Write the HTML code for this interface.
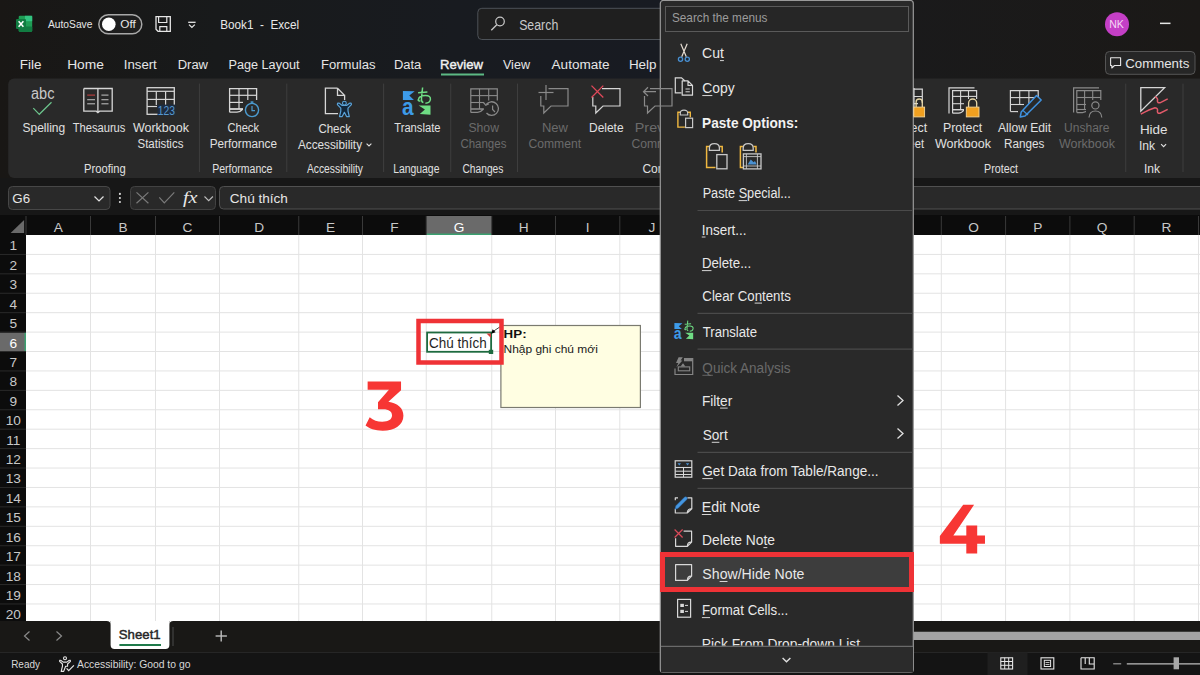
<!DOCTYPE html>
<html><head><meta charset="utf-8"><style>
html,body{margin:0;padding:0;width:1200px;height:675px;overflow:hidden;background:#181b1e;}
svg{display:block;font-family:"Liberation Sans",sans-serif;}
</style></head><body>
<svg width="1200" height="675" viewBox="0 0 1200 675">
<defs><linearGradient id="tg" x1="0" y1="0" x2="1" y2="0"><stop offset="0" stop-color="#191715"/><stop offset="0.18" stop-color="#181a1b"/><stop offset="0.38" stop-color="#181b20"/><stop offset="0.55" stop-color="#181b22"/><stop offset="0.75" stop-color="#1a1a1b"/><stop offset="1" stop-color="#1b1917"/></linearGradient></defs>
<rect x="0" y="0" width="1200" height="178" fill="url(#tg)"/>
<rect x="8.2" y="78.4" width="1205" height="99.6" rx="6" fill="#292929"/>
<rect x="0" y="178" width="1200" height="37" fill="#171717"/>
<rect x="8.5" y="186.5" width="101.5" height="23" rx="4" fill="#292929" stroke="#474747" stroke-width="1"/>
<rect x="130.5" y="186.5" width="85" height="23" rx="4" fill="#292929" stroke="#424242" stroke-width="1"/>
<rect x="219.5" y="186.5" width="1000" height="22.5" rx="4" fill="#292929" stroke="#505050" stroke-width="1"/>
<rect x="0" y="215" width="1200" height="20" fill="#0c0c0c"/>
<rect x="0" y="235" width="26" height="386" fill="#0c0c0c"/>
<rect x="26" y="235" width="1174" height="386" fill="#ffffff"/>
<line x1="90.5" y1="235" x2="90.5" y2="621" stroke="#e3e3e3" stroke-width="1"/>
<line x1="155.5" y1="235" x2="155.5" y2="621" stroke="#e3e3e3" stroke-width="1"/>
<line x1="219.5" y1="235" x2="219.5" y2="621" stroke="#e3e3e3" stroke-width="1"/>
<line x1="298.75" y1="235" x2="298.75" y2="621" stroke="#e3e3e3" stroke-width="1"/>
<line x1="362.5" y1="235" x2="362.5" y2="621" stroke="#e3e3e3" stroke-width="1"/>
<line x1="426.25" y1="235" x2="426.25" y2="621" stroke="#e3e3e3" stroke-width="1"/>
<line x1="491.75" y1="235" x2="491.75" y2="621" stroke="#e3e3e3" stroke-width="1"/>
<line x1="555.5" y1="235" x2="555.5" y2="621" stroke="#e3e3e3" stroke-width="1"/>
<line x1="619.8" y1="235" x2="619.8" y2="621" stroke="#e3e3e3" stroke-width="1"/>
<line x1="684.1" y1="235" x2="684.1" y2="621" stroke="#e3e3e3" stroke-width="1"/>
<line x1="748.4" y1="235" x2="748.4" y2="621" stroke="#e3e3e3" stroke-width="1"/>
<line x1="812.7" y1="235" x2="812.7" y2="621" stroke="#e3e3e3" stroke-width="1"/>
<line x1="877.0" y1="235" x2="877.0" y2="621" stroke="#e3e3e3" stroke-width="1"/>
<line x1="941.3" y1="235" x2="941.3" y2="621" stroke="#e3e3e3" stroke-width="1"/>
<line x1="1005.6" y1="235" x2="1005.6" y2="621" stroke="#e3e3e3" stroke-width="1"/>
<line x1="1069.9" y1="235" x2="1069.9" y2="621" stroke="#e3e3e3" stroke-width="1"/>
<line x1="1134.2" y1="235" x2="1134.2" y2="621" stroke="#e3e3e3" stroke-width="1"/>
<line x1="1198.5" y1="235" x2="1198.5" y2="621" stroke="#e3e3e3" stroke-width="1"/>
<line x1="26" y1="254.42000000000002" x2="1200" y2="254.42000000000002" stroke="#e3e3e3" stroke-width="1"/>
<line x1="26" y1="273.84000000000003" x2="1200" y2="273.84000000000003" stroke="#e3e3e3" stroke-width="1"/>
<line x1="26" y1="293.26" x2="1200" y2="293.26" stroke="#e3e3e3" stroke-width="1"/>
<line x1="26" y1="312.68" x2="1200" y2="312.68" stroke="#e3e3e3" stroke-width="1"/>
<line x1="26" y1="332.1" x2="1200" y2="332.1" stroke="#e3e3e3" stroke-width="1"/>
<line x1="26" y1="351.52" x2="1200" y2="351.52" stroke="#e3e3e3" stroke-width="1"/>
<line x1="26" y1="370.94" x2="1200" y2="370.94" stroke="#e3e3e3" stroke-width="1"/>
<line x1="26" y1="390.36" x2="1200" y2="390.36" stroke="#e3e3e3" stroke-width="1"/>
<line x1="26" y1="409.78000000000003" x2="1200" y2="409.78000000000003" stroke="#e3e3e3" stroke-width="1"/>
<line x1="26" y1="429.20000000000005" x2="1200" y2="429.20000000000005" stroke="#e3e3e3" stroke-width="1"/>
<line x1="26" y1="448.62" x2="1200" y2="448.62" stroke="#e3e3e3" stroke-width="1"/>
<line x1="26" y1="468.04" x2="1200" y2="468.04" stroke="#e3e3e3" stroke-width="1"/>
<line x1="26" y1="487.46000000000004" x2="1200" y2="487.46000000000004" stroke="#e3e3e3" stroke-width="1"/>
<line x1="26" y1="506.88" x2="1200" y2="506.88" stroke="#e3e3e3" stroke-width="1"/>
<line x1="26" y1="526.3" x2="1200" y2="526.3" stroke="#e3e3e3" stroke-width="1"/>
<line x1="26" y1="545.72" x2="1200" y2="545.72" stroke="#e3e3e3" stroke-width="1"/>
<line x1="26" y1="565.1400000000001" x2="1200" y2="565.1400000000001" stroke="#e3e3e3" stroke-width="1"/>
<line x1="26" y1="584.5600000000001" x2="1200" y2="584.5600000000001" stroke="#e3e3e3" stroke-width="1"/>
<line x1="26" y1="603.98" x2="1200" y2="603.98" stroke="#e3e3e3" stroke-width="1"/>
<rect x="426.25" y="216" width="65.5" height="19" fill="#6a6a6a"/>
<rect x="426.25" y="233.5" width="65.5" height="1.5" fill="#3aa070"/>
<rect x="0" y="332.6" width="26" height="19.42" fill="#6a6a6a"/>
<rect x="24.5" y="332.6" width="1.5" height="19.42" fill="#3aa070"/>
<line x1="26" y1="216" x2="26" y2="235" stroke="#3a3a3a" stroke-width="1"/>
<line x1="90.5" y1="216" x2="90.5" y2="235" stroke="#3a3a3a" stroke-width="1"/>
<line x1="155.5" y1="216" x2="155.5" y2="235" stroke="#3a3a3a" stroke-width="1"/>
<line x1="219.5" y1="216" x2="219.5" y2="235" stroke="#3a3a3a" stroke-width="1"/>
<line x1="298.75" y1="216" x2="298.75" y2="235" stroke="#3a3a3a" stroke-width="1"/>
<line x1="362.5" y1="216" x2="362.5" y2="235" stroke="#3a3a3a" stroke-width="1"/>
<line x1="426.25" y1="216" x2="426.25" y2="235" stroke="#3a3a3a" stroke-width="1"/>
<line x1="491.75" y1="216" x2="491.75" y2="235" stroke="#3a3a3a" stroke-width="1"/>
<line x1="555.5" y1="216" x2="555.5" y2="235" stroke="#3a3a3a" stroke-width="1"/>
<line x1="619.8" y1="216" x2="619.8" y2="235" stroke="#3a3a3a" stroke-width="1"/>
<line x1="684.1" y1="216" x2="684.1" y2="235" stroke="#3a3a3a" stroke-width="1"/>
<line x1="748.4" y1="216" x2="748.4" y2="235" stroke="#3a3a3a" stroke-width="1"/>
<line x1="812.7" y1="216" x2="812.7" y2="235" stroke="#3a3a3a" stroke-width="1"/>
<line x1="877.0" y1="216" x2="877.0" y2="235" stroke="#3a3a3a" stroke-width="1"/>
<line x1="941.3" y1="216" x2="941.3" y2="235" stroke="#3a3a3a" stroke-width="1"/>
<line x1="1005.6" y1="216" x2="1005.6" y2="235" stroke="#3a3a3a" stroke-width="1"/>
<line x1="1069.9" y1="216" x2="1069.9" y2="235" stroke="#3a3a3a" stroke-width="1"/>
<line x1="1134.2" y1="216" x2="1134.2" y2="235" stroke="#3a3a3a" stroke-width="1"/>
<line x1="1198.5" y1="216" x2="1198.5" y2="235" stroke="#3a3a3a" stroke-width="1"/>
<line x1="0" y1="254.42000000000002" x2="26" y2="254.42000000000002" stroke="#2a2a2a" stroke-width="1"/>
<line x1="0" y1="273.84000000000003" x2="26" y2="273.84000000000003" stroke="#2a2a2a" stroke-width="1"/>
<line x1="0" y1="293.26" x2="26" y2="293.26" stroke="#2a2a2a" stroke-width="1"/>
<line x1="0" y1="312.68" x2="26" y2="312.68" stroke="#2a2a2a" stroke-width="1"/>
<line x1="0" y1="332.1" x2="26" y2="332.1" stroke="#2a2a2a" stroke-width="1"/>
<line x1="0" y1="351.52" x2="26" y2="351.52" stroke="#2a2a2a" stroke-width="1"/>
<line x1="0" y1="370.94" x2="26" y2="370.94" stroke="#2a2a2a" stroke-width="1"/>
<line x1="0" y1="390.36" x2="26" y2="390.36" stroke="#2a2a2a" stroke-width="1"/>
<line x1="0" y1="409.78000000000003" x2="26" y2="409.78000000000003" stroke="#2a2a2a" stroke-width="1"/>
<line x1="0" y1="429.20000000000005" x2="26" y2="429.20000000000005" stroke="#2a2a2a" stroke-width="1"/>
<line x1="0" y1="448.62" x2="26" y2="448.62" stroke="#2a2a2a" stroke-width="1"/>
<line x1="0" y1="468.04" x2="26" y2="468.04" stroke="#2a2a2a" stroke-width="1"/>
<line x1="0" y1="487.46000000000004" x2="26" y2="487.46000000000004" stroke="#2a2a2a" stroke-width="1"/>
<line x1="0" y1="506.88" x2="26" y2="506.88" stroke="#2a2a2a" stroke-width="1"/>
<line x1="0" y1="526.3" x2="26" y2="526.3" stroke="#2a2a2a" stroke-width="1"/>
<line x1="0" y1="545.72" x2="26" y2="545.72" stroke="#2a2a2a" stroke-width="1"/>
<line x1="0" y1="565.1400000000001" x2="26" y2="565.1400000000001" stroke="#2a2a2a" stroke-width="1"/>
<line x1="0" y1="584.5600000000001" x2="26" y2="584.5600000000001" stroke="#2a2a2a" stroke-width="1"/>
<line x1="0" y1="603.98" x2="26" y2="603.98" stroke="#2a2a2a" stroke-width="1"/>
<path d="M24.1,220 L24.1,233.1 L10.6,233.1 Z" fill="#6a6a6a"/>
<text x="58.25" y="231.9" font-size="13.66" fill="#c8c8c8" text-anchor="middle">A</text>
<text x="123.00" y="231.9" font-size="13.66" fill="#c8c8c8" text-anchor="middle">B</text>
<text x="187.50" y="231.9" font-size="13.66" fill="#c8c8c8" text-anchor="middle">C</text>
<text x="259.12" y="231.9" font-size="13.66" fill="#c8c8c8" text-anchor="middle">D</text>
<text x="330.62" y="231.9" font-size="13.66" fill="#c8c8c8" text-anchor="middle">E</text>
<text x="394.38" y="231.9" font-size="13.66" fill="#c8c8c8" text-anchor="middle">F</text>
<text x="459.00" y="231.9" font-size="13.66" fill="#ffffff" text-anchor="middle">G</text>
<text x="523.62" y="231.9" font-size="13.66" fill="#c8c8c8" text-anchor="middle">H</text>
<text x="587.65" y="231.9" font-size="13.66" fill="#c8c8c8" text-anchor="middle">I</text>
<text x="651.95" y="231.9" font-size="13.66" fill="#c8c8c8" text-anchor="middle">J</text>
<text x="716.25" y="231.9" font-size="13.66" fill="#c8c8c8" text-anchor="middle">K</text>
<text x="780.55" y="231.9" font-size="13.66" fill="#c8c8c8" text-anchor="middle">L</text>
<text x="844.85" y="231.9" font-size="13.66" fill="#c8c8c8" text-anchor="middle">M</text>
<text x="909.15" y="231.9" font-size="13.66" fill="#c8c8c8" text-anchor="middle">N</text>
<text x="973.45" y="231.9" font-size="13.66" fill="#c8c8c8" text-anchor="middle">O</text>
<text x="1037.75" y="231.9" font-size="13.66" fill="#c8c8c8" text-anchor="middle">P</text>
<text x="1102.05" y="231.9" font-size="13.66" fill="#c8c8c8" text-anchor="middle">Q</text>
<text x="1166.35" y="231.9" font-size="13.66" fill="#c8c8c8" text-anchor="middle">R</text>
<text x="13.3" y="250.40" font-size="13.66" fill="#c8c8c8" text-anchor="middle">1</text>
<text x="13.3" y="269.82" font-size="13.66" fill="#c8c8c8" text-anchor="middle">2</text>
<text x="13.3" y="289.24" font-size="13.66" fill="#c8c8c8" text-anchor="middle">3</text>
<text x="13.3" y="308.66" font-size="13.66" fill="#c8c8c8" text-anchor="middle">4</text>
<text x="13.3" y="328.08" font-size="13.66" fill="#c8c8c8" text-anchor="middle">5</text>
<text x="13.3" y="347.50" font-size="13.66" fill="#ffffff" text-anchor="middle">6</text>
<text x="13.3" y="366.92" font-size="13.66" fill="#c8c8c8" text-anchor="middle">7</text>
<text x="13.3" y="386.34" font-size="13.66" fill="#c8c8c8" text-anchor="middle">8</text>
<text x="13.3" y="405.76" font-size="13.66" fill="#c8c8c8" text-anchor="middle">9</text>
<text x="13.3" y="425.18" font-size="13.66" fill="#c8c8c8" text-anchor="middle">10</text>
<text x="13.3" y="444.60" font-size="13.66" fill="#c8c8c8" text-anchor="middle">11</text>
<text x="13.3" y="464.02" font-size="13.66" fill="#c8c8c8" text-anchor="middle">12</text>
<text x="13.3" y="483.44" font-size="13.66" fill="#c8c8c8" text-anchor="middle">13</text>
<text x="13.3" y="502.86" font-size="13.66" fill="#c8c8c8" text-anchor="middle">14</text>
<text x="13.3" y="522.28" font-size="13.66" fill="#c8c8c8" text-anchor="middle">15</text>
<text x="13.3" y="541.70" font-size="13.66" fill="#c8c8c8" text-anchor="middle">16</text>
<text x="13.3" y="561.12" font-size="13.66" fill="#c8c8c8" text-anchor="middle">17</text>
<text x="13.3" y="580.54" font-size="13.66" fill="#c8c8c8" text-anchor="middle">18</text>
<text x="13.3" y="599.96" font-size="13.66" fill="#c8c8c8" text-anchor="middle">19</text>
<text x="13.3" y="619.38" font-size="13.66" fill="#c8c8c8" text-anchor="middle">20</text>
<rect x="0" y="621" width="1200" height="31.5" fill="#191816"/>
<path d="M110.6,621 L169.4,621 L169.4,645 Q169.4,649 165.4,649 L114.6,649 Q110.6,649 110.6,645 Z" fill="#ffffff"/>
<path d="M106.6,621 Q110.6,621 110.6,625 L110.6,621 Z" fill="#ffffff"/>
<path d="M173.4,621 Q169.4,621 169.4,625 L169.4,621 Z" fill="#ffffff"/>
<rect x="119.4" y="644" width="41.6" height="2" fill="#1f7a4a"/>
<line x1="173" y1="627" x2="173" y2="646" stroke="#4a4a4a" stroke-width="1"/>
<rect x="0" y="652" width="1200" height="23" fill="#141414"/>
<line x1="0" y1="652.5" x2="1200" y2="652.5" stroke="#262626" stroke-width="1"/>
<rect x="913" y="631.75" width="287" height="8.25" fill="#a3a3a3"/>
<text x="47.98" y="28.30" font-size="11.05" textLength="44.48" lengthAdjust="spacingAndGlyphs" fill="#e6e6e6">AutoSave</text>
<rect x="98.8" y="14.8" width="43" height="19" rx="9.5" fill="#1e1e1e" stroke="#a8a8a8" stroke-width="1.5"/>
<circle cx="108.8" cy="24.3" r="6.8" fill="#ffffff"/>
<text x="120.24" y="28.30" font-size="11.05" textLength="15.54" lengthAdjust="spacingAndGlyphs" fill="#e6e6e6">Off</text>
<text x="220.29" y="29.25" font-size="13.23" textLength="78.75" lengthAdjust="spacingAndGlyphs" fill="#e8e8e8" xml:space="preserve">Book1  -  Excel</text>
<rect x="477.8" y="8.3" width="200" height="31.2" rx="4" fill="#1f1f1f" stroke="#4d5258" stroke-width="1"/>
<text x="519.14" y="29.70" font-size="13.81" textLength="39.17" lengthAdjust="spacingAndGlyphs" fill="#c8c8c8">Search</text>
<circle cx="1117" cy="24.2" r="12" fill="#c43fc6"/>
<text x="1109.13" y="28.30" font-size="10.90" textLength="14.70" lengthAdjust="spacingAndGlyphs" fill="#f4d8f4">NK</text>
<rect x="1160" y="22.6" width="10.5" height="1.5" fill="#e6e6e6"/>
<rect x="1105.5" y="51.5" width="89.5" height="22.8" rx="4" fill="#262626" stroke="#555555" stroke-width="1"/>
<text x="1125.22" y="68.00" font-size="12.79" textLength="64.05" lengthAdjust="spacingAndGlyphs" fill="#e6e6e6">Comments</text>
<text x="19.70" y="69.20" font-size="13.66" textLength="21.70" lengthAdjust="spacingAndGlyphs" fill="#e6e6e6">File</text>
<text x="67.17" y="69.20" font-size="13.66" textLength="36.74" lengthAdjust="spacingAndGlyphs" fill="#e6e6e6">Home</text>
<text x="123.79" y="69.20" font-size="13.66" textLength="33.01" lengthAdjust="spacingAndGlyphs" fill="#e6e6e6">Insert</text>
<text x="177.69" y="69.20" font-size="13.66" textLength="30.28" lengthAdjust="spacingAndGlyphs" fill="#e6e6e6">Draw</text>
<text x="228.46" y="69.20" font-size="13.66" textLength="71.12" lengthAdjust="spacingAndGlyphs" fill="#e6e6e6">Page Layout</text>
<text x="320.93" y="69.20" font-size="13.66" textLength="54.54" lengthAdjust="spacingAndGlyphs" fill="#e6e6e6">Formulas</text>
<text x="393.94" y="69.20" font-size="13.66" textLength="27.31" lengthAdjust="spacingAndGlyphs" fill="#e6e6e6">Data</text>
<text x="502.95" y="69.20" font-size="13.66" textLength="27.02" lengthAdjust="spacingAndGlyphs" fill="#e6e6e6">View</text>
<text x="551.57" y="69.20" font-size="13.66" textLength="58.03" lengthAdjust="spacingAndGlyphs" fill="#e6e6e6">Automate</text>
<text x="628.90" y="69.20" font-size="13.66" textLength="27.66" lengthAdjust="spacingAndGlyphs" fill="#e6e6e6">Help</text>
<text x="439.92" y="69.20" font-size="13.66" textLength="43.03" lengthAdjust="spacingAndGlyphs" fill="#f2f2f2" stroke="#f2f2f2" stroke-width="0.4">Review</text>
<rect x="441" y="73.5" width="43" height="2" fill="#5cb984"/>
<text x="22.46" y="131.80" font-size="13.08" textLength="42.71" lengthAdjust="spacingAndGlyphs" fill="#e0e0e0">Spelling</text>
<text x="72.75" y="131.80" font-size="13.08" textLength="52.64" lengthAdjust="spacingAndGlyphs" fill="#e0e0e0">Thesaurus</text>
<text x="132.95" y="131.80" font-size="13.08" textLength="56.04" lengthAdjust="spacingAndGlyphs" fill="#e0e0e0">Workbook</text>
<text x="137.48" y="148.00" font-size="13.08" textLength="45.93" lengthAdjust="spacingAndGlyphs" fill="#e0e0e0">Statistics</text>
<text x="84.08" y="173.20" font-size="12.50" textLength="41.64" lengthAdjust="spacingAndGlyphs" fill="#e0e0e0">Proofing</text>
<text x="227.43" y="131.80" font-size="13.08" textLength="31.56" lengthAdjust="spacingAndGlyphs" fill="#e0e0e0">Check</text>
<text x="209.63" y="148.00" font-size="13.08" textLength="67.38" lengthAdjust="spacingAndGlyphs" fill="#e0e0e0">Performance</text>
<text x="212.14" y="173.20" font-size="12.50" textLength="60.32" lengthAdjust="spacingAndGlyphs" fill="#e0e0e0">Performance</text>
<text x="318.41" y="132.80" font-size="13.08" textLength="32.58" lengthAdjust="spacingAndGlyphs" fill="#e0e0e0">Check</text>
<text x="297.98" y="149.00" font-size="13.08" textLength="64.05" lengthAdjust="spacingAndGlyphs" fill="#e0e0e0">Accessibility</text>
<text x="306.98" y="173.20" font-size="12.50" textLength="56.04" lengthAdjust="spacingAndGlyphs" fill="#e0e0e0">Accessibility</text>
<text x="394.25" y="131.80" font-size="13.08" textLength="46.24" lengthAdjust="spacingAndGlyphs" fill="#e0e0e0">Translate</text>
<text x="393.15" y="173.20" font-size="12.50" textLength="46.31" lengthAdjust="spacingAndGlyphs" fill="#e0e0e0">Language</text>
<text x="468.45" y="131.80" font-size="13.08" textLength="30.52" lengthAdjust="spacingAndGlyphs" fill="#6b6b6b">Show</text>
<text x="460.41" y="148.00" font-size="13.08" textLength="46.00" lengthAdjust="spacingAndGlyphs" fill="#6b6b6b">Changes</text>
<text x="462.48" y="173.20" font-size="12.50" textLength="40.89" lengthAdjust="spacingAndGlyphs" fill="#e0e0e0">Changes</text>
<text x="541.93" y="131.80" font-size="13.08" textLength="26.03" lengthAdjust="spacingAndGlyphs" fill="#6b6b6b">New</text>
<text x="528.38" y="148.00" font-size="13.08" textLength="52.70" lengthAdjust="spacingAndGlyphs" fill="#6b6b6b">Comment</text>
<text x="589.02" y="131.80" font-size="13.08" textLength="34.51" lengthAdjust="spacingAndGlyphs" fill="#e0e0e0">Delete</text>
<text x="634.83" y="131.80" font-size="13.08" textLength="55.68" lengthAdjust="spacingAndGlyphs" fill="#6b6b6b">Previous</text>
<text x="631.38" y="148.00" font-size="13.08" textLength="52.70" lengthAdjust="spacingAndGlyphs" fill="#6b6b6b">Comment</text>
<text x="642.39" y="173.20" font-size="12.50" textLength="58.04" lengthAdjust="spacingAndGlyphs" fill="#e0e0e0">Comments</text>
<text x="887.99" y="131.80" font-size="13.08" textLength="39.10" lengthAdjust="spacingAndGlyphs" fill="#e0e0e0">Protect</text>
<text x="895.00" y="148.00" font-size="13.08" textLength="29.08" lengthAdjust="spacingAndGlyphs" fill="#e0e0e0">Sheet</text>
<text x="942.99" y="131.80" font-size="13.08" textLength="39.10" lengthAdjust="spacingAndGlyphs" fill="#e0e0e0">Protect</text>
<text x="934.95" y="148.00" font-size="13.08" textLength="56.04" lengthAdjust="spacingAndGlyphs" fill="#e0e0e0">Workbook</text>
<text x="997.98" y="131.80" font-size="13.08" textLength="53.10" lengthAdjust="spacingAndGlyphs" fill="#e0e0e0">Allow Edit</text>
<text x="1004.04" y="148.00" font-size="13.08" textLength="40.38" lengthAdjust="spacingAndGlyphs" fill="#e0e0e0">Ranges</text>
<text x="1064.07" y="131.80" font-size="13.08" textLength="45.45" lengthAdjust="spacingAndGlyphs" fill="#6b6b6b">Unshare</text>
<text x="1058.95" y="148.00" font-size="13.08" textLength="56.04" lengthAdjust="spacingAndGlyphs" fill="#6b6b6b">Workbook</text>
<text x="984.12" y="173.20" font-size="12.50" textLength="33.95" lengthAdjust="spacingAndGlyphs" fill="#e0e0e0">Protect</text>
<text x="1139.90" y="134.00" font-size="13.08" textLength="27.69" lengthAdjust="spacingAndGlyphs" fill="#e0e0e0">Hide</text>
<text x="1138.89" y="150.00" font-size="13.08" textLength="16.10" lengthAdjust="spacingAndGlyphs" fill="#e0e0e0">Ink</text>
<text x="1143.89" y="173.20" font-size="12.50" textLength="16.10" lengthAdjust="spacingAndGlyphs" fill="#e0e0e0">Ink</text>
<line x1="199.4" y1="83.6" x2="199.4" y2="172" stroke="#3e3e3e" stroke-width="1"/>
<line x1="286.8" y1="83.6" x2="286.8" y2="172" stroke="#3e3e3e" stroke-width="1"/>
<line x1="383.6" y1="83.6" x2="383.6" y2="172" stroke="#3e3e3e" stroke-width="1"/>
<line x1="450.75" y1="83.6" x2="450.75" y2="172" stroke="#3e3e3e" stroke-width="1"/>
<line x1="517.5" y1="83.6" x2="517.5" y2="172" stroke="#3e3e3e" stroke-width="1"/>
<line x1="1125.75" y1="83.6" x2="1125.75" y2="172" stroke="#3e3e3e" stroke-width="1"/>
<line x1="1183" y1="83.6" x2="1183" y2="172" stroke="#3e3e3e" stroke-width="1"/>
<text x="12.33" y="202.50" font-size="13.08" textLength="17.75" lengthAdjust="spacingAndGlyphs" fill="#e6e6e6">G6</text>
<text x="229.81" y="203.00" font-size="13.52" textLength="58.08" lengthAdjust="spacingAndGlyphs" fill="#e6e6e6">Chú thích</text>
<text x="429.11" y="347.50" font-size="13.95" textLength="57.56" lengthAdjust="spacingAndGlyphs" fill="#1f1f1f">Chú thích</text>
<rect x="427.1" y="332.5" width="64" height="19.3" fill="none" stroke="#1e6b40" stroke-width="1.8"/>
<rect x="488.8" y="349.8" width="4.4" height="4.2" fill="#1e6b40"/>
<path d="M486.5,333.5 L491,333.5 L491,338 Z" fill="#d83b3b"/>
<rect x="500.9" y="325.5" width="139.5" height="82" fill="#fffee2" stroke="#7a7a70" stroke-width="1.2"/>
<text x="503.61" y="338.00" font-size="10.76" textLength="22.98" lengthAdjust="spacingAndGlyphs" fill="#111111" font-weight="bold">HP:</text>
<text x="503.52" y="353.20" font-size="11.34" textLength="94.28" lengthAdjust="spacingAndGlyphs" fill="#1a1a1a">Nhập ghi chú mới</text>
<line x1="493" y1="331.5" x2="500.5" y2="326.5" stroke="#333" stroke-width="0.9"/>
<path d="M491.2,333.8 L492.6,329.2 L495.6,332.2 Z" fill="#000"/>
<rect x="418.5" y="321" width="83" height="41.5" fill="none" stroke="#ef3236" stroke-width="4.5"/>
<g transform="translate(350,370) scale(0.10373)"><path d="M170,110 L492,110 L492,195 L370,305 C460,320 515,365 515,440 C515,530 430,585 315,585 C240,585 185,565 150,535 L190,455 C225,485 265,498 310,498 C370,498 405,475 405,438 C405,400 375,378 320,378 L270,378 L270,310 L375,190 L170,190 Z" fill="#f73634"/></g>
<g transform="translate(930,495) scale(0.10373)"><path d="M320,95 L425,95 L225,390 L350,390 L350,295 L455,295 L455,390 L530,390 L530,470 L455,470 L455,565 L350,565 L350,470 L95,470 L95,395 Z" fill="#f73634"/></g>
<text x="118.81" y="639.00" font-size="13.66" textLength="41.85" lengthAdjust="spacingAndGlyphs" fill="#262626" stroke="#262626" stroke-width="0.45">Sheet1</text>
<path d="M24.5,631.5 L29.5,636 L24.5,640.5" fill="none" stroke="#8a8a8a" stroke-width="1.2" transform="matrix(-1,0,0,1,54,0)"/>
<path d="M56.5,631.5 L61.5,636 L56.5,640.5" fill="none" stroke="#8a8a8a" stroke-width="1.2"/>
<line x1="221.2" y1="630.6" x2="221.2" y2="641.5" stroke="#bdbdbd" stroke-width="1.4"/>
<line x1="215.6" y1="636" x2="226.9" y2="636" stroke="#bdbdbd" stroke-width="1.4"/>
<text x="11.18" y="668.00" font-size="10.17" textLength="28.83" lengthAdjust="spacingAndGlyphs" fill="#d8d8d8">Ready</text>
<text x="76.98" y="668.00" font-size="10.17" textLength="113.45" lengthAdjust="spacingAndGlyphs" fill="#d8d8d8">Accessibility: Good to go</text>
<rect x="987.5" y="652.5" width="40" height="22.5" fill="#1f1f1f"/>
<rect x="660.3" y="0.5" width="253" height="672" rx="3" fill="#292929" stroke="#9a9a9a" stroke-width="1.2"/>
<rect x="665.5" y="6.5" width="243" height="25" fill="#262626" stroke="#5a5a5a" stroke-width="1"/>
<text x="671.97" y="22.20" font-size="12.79" textLength="95.45" lengthAdjust="spacingAndGlyphs" fill="#9c9c9c">Search the menus</text>
<text x="702.09" y="58.30" font-size="14.83" textLength="21.82" lengthAdjust="spacingAndGlyphs" fill="#e8e8e8">Cut</text>
<line x1="720.01" y1="60.599999999999994" x2="723.9" y2="60.599999999999994" stroke="#e8e8e8" stroke-width="0.9"/>
<text x="702.29" y="93.25" font-size="14.83" textLength="32.44" lengthAdjust="spacingAndGlyphs" fill="#e8e8e8">Copy</text>
<line x1="702.29" y1="95.55" x2="712.33" y2="95.55" stroke="#e8e8e8" stroke-width="0.9"/>
<text x="702.66" y="198.30" font-size="14.83" textLength="88.20" lengthAdjust="spacingAndGlyphs" fill="#e8e8e8">Paste Special...</text>
<line x1="738.65" y1="200.60000000000002" x2="747.11" y2="200.60000000000002" stroke="#e8e8e8" stroke-width="0.9"/>
<text x="701.77" y="234.70" font-size="14.83" textLength="44.75" lengthAdjust="spacingAndGlyphs" fill="#e8e8e8">Insert...</text>
<line x1="701.77" y1="237.0" x2="705.49" y2="237.0" stroke="#e8e8e8" stroke-width="0.9"/>
<text x="701.91" y="268.30" font-size="14.83" textLength="49.29" lengthAdjust="spacingAndGlyphs" fill="#e8e8e8">Delete...</text>
<line x1="701.91" y1="270.6" x2="711.47" y2="270.6" stroke="#e8e8e8" stroke-width="0.9"/>
<text x="702.32" y="300.80" font-size="14.83" textLength="88.45" lengthAdjust="spacingAndGlyphs" fill="#e8e8e8">Clear Contents</text>
<line x1="754.65" y1="303.1" x2="762.03" y2="303.1" stroke="#e8e8e8" stroke-width="0.9"/>
<text x="702.71" y="336.70" font-size="14.83" textLength="54.37" lengthAdjust="spacingAndGlyphs" fill="#e8e8e8">Translate</text>
<text x="701.88" y="405.80" font-size="14.83" textLength="30.34" lengthAdjust="spacingAndGlyphs" fill="#e8e8e8">Filter</text>
<line x1="720.08" y1="408.1" x2="727.67" y2="408.1" stroke="#e8e8e8" stroke-width="0.9"/>
<text x="702.69" y="440.00" font-size="14.83" textLength="25.01" lengthAdjust="spacingAndGlyphs" fill="#e8e8e8">Sort</text>
<line x1="711.78" y1="442.3" x2="719.37" y2="442.3" stroke="#e8e8e8" stroke-width="0.9"/>
<text x="702.32" y="476.30" font-size="14.83" textLength="176.22" lengthAdjust="spacingAndGlyphs" fill="#e8e8e8">Get Data from Table/Range...</text>
<line x1="702.32" y1="478.6" x2="712.87" y2="478.6" stroke="#e8e8e8" stroke-width="0.9"/>
<text x="701.84" y="512.20" font-size="14.83" textLength="58.29" lengthAdjust="spacingAndGlyphs" fill="#e8e8e8">Edit Note</text>
<line x1="701.84" y1="514.5" x2="711.29" y2="514.5" stroke="#e8e8e8" stroke-width="0.9"/>
<text x="702.07" y="545.30" font-size="14.83" textLength="72.94" lengthAdjust="spacingAndGlyphs" fill="#e8e8e8">Delete Note</text>
<line x1="763.49" y1="547.5999999999999" x2="767.32" y2="547.5999999999999" stroke="#e8e8e8" stroke-width="0.9"/>
<text x="702.36" y="579.20" font-size="14.83" textLength="102.06" lengthAdjust="spacingAndGlyphs" fill="#e8e8e8">Show/Hide Note</text>
<line x1="719.64" y1="581.5" x2="727.49" y2="581.5" stroke="#e8e8e8" stroke-width="0.9"/>
<text x="701.91" y="615.30" font-size="14.83" textLength="86.30" lengthAdjust="spacingAndGlyphs" fill="#e8e8e8">Format Cells...</text>
<line x1="701.91" y1="617.5999999999999" x2="710.02" y2="617.5999999999999" stroke="#e8e8e8" stroke-width="0.9"/>
<text x="702.09" y="127.70" font-size="14.83" textLength="96.22" lengthAdjust="spacingAndGlyphs" fill="#f2f2f2" font-weight="bold">Paste Options:</text>
<text x="702.36" y="373.00" font-size="14.83" textLength="88.13" lengthAdjust="spacingAndGlyphs" fill="#6a6a6a">Quick Analysis</text>
<line x1="702.36" y1="375.3" x2="712.91" y2="375.3" stroke="#6a6a6a" stroke-width="0.9"/>
<line x1="697.5" y1="210.5" x2="913" y2="210.5" stroke="#4a4a4a" stroke-width="1.2"/>
<line x1="697.5" y1="313.3" x2="913" y2="313.3" stroke="#4a4a4a" stroke-width="1.2"/>
<line x1="697.5" y1="349.2" x2="913" y2="349.2" stroke="#4a4a4a" stroke-width="1.2"/>
<line x1="697.5" y1="452.4" x2="913" y2="452.4" stroke="#4a4a4a" stroke-width="1.2"/>
<line x1="697.5" y1="488.4" x2="913" y2="488.4" stroke="#4a4a4a" stroke-width="1.2"/>
<path d="M897.5,395.5 L903,400.5 L897.5,405.5" fill="none" stroke="#e0e0e0" stroke-width="1.3"/>
<path d="M897.5,428.5 L903,433.5 L897.5,438.5" fill="none" stroke="#e0e0e0" stroke-width="1.3"/>
<rect x="662" y="553" width="250" height="38" fill="#3d3d3d"/>
<rect x="662.5" y="554.5" width="249" height="35" fill="none" stroke="#ef3236" stroke-width="5"/>
<text x="702.36" y="579.20" font-size="14.83" textLength="102.06" lengthAdjust="spacingAndGlyphs" fill="#e8e8e8">Show/Hide Note</text>
<line x1="719.64" y1="581.5" x2="727.49" y2="581.5" stroke="#e8e8e8" stroke-width="0.9"/>
<clipPath id="pk"><rect x="660" y="620" width="254" height="25.8"/></clipPath>
<text x="701.87" y="648.60" font-size="14.83" textLength="158.22" lengthAdjust="spacingAndGlyphs" fill="#e8e8e8" clip-path="url(#pk)">Pick From Drop-down List</text>
<rect x="661" y="646.5" width="252" height="26" fill="#2b2b2b"/>
<line x1="661" y1="646.3" x2="913" y2="646.3" stroke="#6a6a6a" stroke-width="1.2"/>
<path d="M782.6,658 L786.5,661.8 L790.4,658" fill="none" stroke="#e0e0e0" stroke-width="1.4"/>
<rect x="18.7" y="15.8" width="13.5" height="16" rx="1.2" fill="#1f9d55"/>
<rect x="25" y="15.8" width="7.2" height="5.4" fill="#33c481"/>
<rect x="18.7" y="26.4" width="13.5" height="5.4" rx="1" fill="#107c41"/>
<rect x="16" y="19.1" width="10" height="9.8" rx="1" fill="#107c41"/>
<path d="M18.6,21.2 L23.4,26.8 M23.4,21.2 L18.6,26.8" stroke="#ffffff" stroke-width="1.5"/>
<path d="M156,16.7 L170.3,16.7 L170.3,31.3 L158,31.3 L156,29.3 Z" fill="none" stroke="#e6e6e6" stroke-width="1.3"/>
<path d="M158.6,16.7 L158.6,22.5 L166.8,22.5 L166.8,16.7" fill="none" stroke="#e6e6e6" stroke-width="1.2"/>
<path d="M159.8,31.3 L159.8,26.6 L166.8,26.6 L166.8,31.3" fill="none" stroke="#e6e6e6" stroke-width="1.2"/>
<line x1="188.2" y1="22.3" x2="195.6" y2="22.3" stroke="#e6e6e6" stroke-width="1.3"/>
<path d="M189,24.6 L191.9,27.4 L194.8,24.6" fill="none" stroke="#e6e6e6" stroke-width="1.3"/>
<circle cx="500" cy="21.5" r="4.3" fill="none" stroke="#c8c8c8" stroke-width="1.2"/>
<line x1="496.8" y1="24.8" x2="491.3" y2="30.3" stroke="#c8c8c8" stroke-width="1.3"/>
<path d="M1110.6,57.8 L1120.6,57.8 L1120.6,65.5 L1114.5,65.5 L1111.8,68 L1111.8,65.5 L1110.6,65.5 Z" fill="none" stroke="#e6e6e6" stroke-width="1.1" stroke-linejoin="round"/>
<text x="31.0" y="99.2" font-size="15.6" textLength="23.4" lengthAdjust="spacingAndGlyphs" fill="#c8c8c8">abc</text>
<path d="M33.3,108.1 L39.3,114.3 L51.5,102.2" fill="none" stroke="#6cc48c" stroke-width="1.2"/>
<path d="M83.8,88.5 L97.9,88.5 L97.9,111.5 M83.8,88.5 L83.8,111.2 L96.2,111.2 L97.9,112.6 L99.6,111.2 L112.2,111.2 L112.2,88.5 L97.9,88.5" fill="none" stroke="#d6d6d6" stroke-width="1.3"/>
<line x1="87.2" y1="95.1" x2="95" y2="95.1" stroke="#c04040" stroke-width="1.1"/>
<line x1="87.2" y1="99.7" x2="95" y2="99.7" stroke="#b8b8b8" stroke-width="1.1"/>
<line x1="87.2" y1="103.8" x2="95" y2="103.8" stroke="#b8b8b8" stroke-width="1.1"/>
<line x1="101.4" y1="95.1" x2="108.5" y2="95.1" stroke="#b8b8b8" stroke-width="1.1"/>
<line x1="101.4" y1="99.7" x2="108.5" y2="99.7" stroke="#b8b8b8" stroke-width="1.1"/>
<line x1="101.4" y1="103.8" x2="108.5" y2="103.8" stroke="#b8b8b8" stroke-width="1.1"/>
<rect x="147.1" y="87.7" width="27.2" height="26.6" fill="none" stroke="#d6d6d6" stroke-width="1.3"/>
<line x1="147.1" y1="91.3" x2="174.3" y2="91.3" stroke="#d6d6d6" stroke-width="1.2"/>
<line x1="156.3" y1="91.5" x2="156.3" y2="105" stroke="#d6d6d6" stroke-width="1.2"/>
<line x1="165.6" y1="91.5" x2="165.6" y2="105" stroke="#d6d6d6" stroke-width="1.2"/>
<line x1="147.1" y1="99.4" x2="174.3" y2="99.4" stroke="#d6d6d6" stroke-width="1.2"/>
<line x1="147.1" y1="106.5" x2="157" y2="106.5" stroke="#d6d6d6" stroke-width="1.2"/>
<rect x="157.5" y="104.6" width="18" height="10.8" fill="#1c2c40"/>
<text x="157.8" y="114.6" font-size="13" textLength="17.2" lengthAdjust="spacingAndGlyphs" fill="#5796cc">123</text>
<path d="M229.6,112.2 L229.6,88.6 L256.6,88.6 L256.6,102.4" fill="none" stroke="#d6d6d6" stroke-width="1.3"/>
<line x1="239" y1="88.6" x2="239" y2="109" stroke="#d6d6d6" stroke-width="1.2"/>
<line x1="247.8" y1="88.6" x2="247.8" y2="102.4" stroke="#d6d6d6" stroke-width="1.2"/>
<line x1="229.6" y1="95.3" x2="256.6" y2="95.3" stroke="#d6d6d6" stroke-width="1.2"/>
<line x1="229.6" y1="102.4" x2="247.8" y2="102.4" stroke="#d6d6d6" stroke-width="1.2"/>
<line x1="229.6" y1="109" x2="247.8" y2="109" stroke="#d6d6d6" stroke-width="1.2"/>
<path d="M229.6,109 L243,109 M229.6,112.2 L237,112.2 Q240,112.2 243,109" fill="none" stroke="#d6d6d6" stroke-width="1.3"/>
<rect x="243" y="100" width="18" height="18" fill="#292929"/>
<circle cx="252" cy="110" r="6.6" fill="none" stroke="#4b9bd0" stroke-width="1.4"/>
<rect x="250.6" y="101.3" width="2.8" height="1.6" fill="#4b9bd0"/>
<path d="M252,106 L252,110.6 L255,110.6" fill="none" stroke="#4b9bd0" stroke-width="1.2"/>
<path d="M337.5,88.2 L325.4,88.2 L325.4,113.7 L338,113.7 M337.5,88.2 L337.5,95.4 L344.6,95.4 L344.6,100 M337.5,88.2 L344.6,95.4" fill="none" stroke="#d6d6d6" stroke-width="1.3"/>
<path d="M337.4,104.6 Q337.3,102.3 339.6,103.4 L342.2,105.4 L346.6,105.4 L349.2,103.4 Q351.5,102.3 351.4,104.6 L348,108.2 L348,111 L349.3,116.6 L346.6,116.6 L344.4,112.3 L342.2,116.6 L339.5,116.6 L340.8,111 L340.8,108.2 Z" fill="#12263a" stroke="#5aa2d8" stroke-width="1.2" stroke-linejoin="round"/>
<circle cx="344.4" cy="103.2" r="1.9" fill="#12263a" stroke="#5aa2d8" stroke-width="1.1"/>
<path d="M366.6,143.6 L369,146 L371.4,143.6" fill="none" stroke="#e0e0e0" stroke-width="1.1"/>
<g transform="translate(402.9,91) scale(1.0)"><path d="M0,0 L11.8,0.3 L6.4,4.6 L11,9 L0,9 Z" fill="#3d9be9"/><text x="-0.8" y="24.2" font-size="24" font-weight="bold" textLength="11.6" lengthAdjust="spacingAndGlyphs" fill="#3d9be9">a</text><path d="M15.8,14.5 L27.6,14.5 L27.6,23.8 L16.9,23 L22,18.5 Z" fill="#6fdc84"/><path d="M15.2,1.7 L24.5,1 M19.7,-3.5 L18.7,6 Q18,11 20.5,11.5 M15.5,8.8 Q16,4.5 22.5,4.5 Q28,4.5 27.5,8.5 Q27,12 22.5,12.3 M17.5,10 Q15,10 15.2,8.5" fill="none" stroke="#6fdc84" stroke-width="1.5"/></g>
<path d="M470.8,112.4 L470.8,88.8 L497.3,88.8 L497.3,102.5" fill="none" stroke="#8a8a8a" stroke-width="1.2"/>
<line x1="479.5" y1="88.8" x2="479.5" y2="109" stroke="#8a8a8a" stroke-width="1.0999999999999999"/>
<line x1="488.7" y1="88.8" x2="488.7" y2="102.5" stroke="#8a8a8a" stroke-width="1.0999999999999999"/>
<line x1="470.8" y1="95.6" x2="497.3" y2="95.6" stroke="#8a8a8a" stroke-width="1.0999999999999999"/>
<line x1="470.8" y1="102.5" x2="488.7" y2="102.5" stroke="#8a8a8a" stroke-width="1.0999999999999999"/>
<line x1="470.8" y1="109" x2="488.7" y2="109" stroke="#8a8a8a" stroke-width="1.0999999999999999"/>
<path d="M470.8,109 L483.5,109 M470.8,112.4 L477.5,112.4 Q480.5,112.4 483.5,109" fill="none" stroke="#8a8a8a" stroke-width="1.2"/>
<rect x="484" y="100.5" width="17" height="17" fill="#292929"/>
<path d="M486.2,104.5 A6.8,6.8 0 1,1 486.5,113" fill="none" stroke="#8a8a8a" stroke-width="1.3"/>
<path d="M483.5,102.5 L485.8,105.3 L489,103.8" fill="none" stroke="#8a8a8a" stroke-width="1.2"/>
<path d="M492.6,105.5 L492.6,109.5 L495,112" fill="none" stroke="#8a8a8a" stroke-width="1.2"/>
<path d="M548.5,88.6 L568,88.6 L568,106 L551,106 L543.8,113 L543.8,106 L540.8,106 L540.8,96" fill="none" stroke="#8a8a8a" stroke-width="1.2"/>
<line x1="546" y1="85" x2="546" y2="100" stroke="#8a8a8a" stroke-width="1.2"/>
<line x1="538.5" y1="92.5" x2="553.5" y2="92.5" stroke="#8a8a8a" stroke-width="1.2"/>
<path d="M602,88.6 L620,88.6 L620,106 L603,106 L595.8,113 L595.8,106 L592.8,106 L592.8,97" fill="none" stroke="#d6d6d6" stroke-width="1.2"/>
<path d="M591.5,85.6 L603.3,97.5 M603.3,85.6 L591.5,97.5" stroke="#e0485a" stroke-width="1.3"/>
<path d="M650,88.6 L672,88.6 L672,106 L655,106 L647.5,113 L647.5,106 L644.5,106 L644.5,96" fill="none" stroke="#8a8a8a" stroke-width="1.2"/>
<path d="M648,87.3 L643.5,91.7 L648,96 M643.5,91.7 L656,91.7" fill="none" stroke="#8a8a8a" stroke-width="1.2"/>
<path d="M914,88 L914,116 M914,89.2 L922.3,89.2 L922.3,103 M914,96.5 L922.3,96.5 M914,103.6 L918,103.6" fill="none" stroke="#d6d6d6" stroke-width="1.2"/>
<path d="M916.1,107.1 L916.1,102.10000000000004 A3.1000000000000343,3.1000000000000343 0 0,1 922.3000000000001,102.10000000000004 L922.3000000000001,107.1" fill="none" stroke="#e8d8a8" stroke-width="1.3"/>
<rect x="913.8" y="107.1" width="10.800000000000068" height="9.800000000000011" fill="#f0a020" stroke="#f5d596" stroke-width="0.9"/>
<path d="M949,113.5 L949,87.9 L974.5,87.9" fill="none" stroke="#d6d6d6" stroke-width="1.2"/>
<path d="M952.6,113.2 L952.6,90.6 L976.6,90.6 L976.6,103.7" fill="none" stroke="#d6d6d6" stroke-width="1.2"/>
<line x1="960.6" y1="90.6" x2="960.6" y2="109.7" stroke="#d6d6d6" stroke-width="1.0999999999999999"/>
<line x1="968.5" y1="90.6" x2="968.5" y2="103.7" stroke="#d6d6d6" stroke-width="1.0999999999999999"/>
<line x1="952.6" y1="96.4" x2="976.6" y2="96.4" stroke="#d6d6d6" stroke-width="1.0999999999999999"/>
<line x1="952.6" y1="103.7" x2="968.5" y2="103.7" stroke="#d6d6d6" stroke-width="1.0999999999999999"/>
<line x1="952.6" y1="109.7" x2="968.5" y2="109.7" stroke="#d6d6d6" stroke-width="1.0999999999999999"/>
<path d="M952.6,109.7 L964.6,109.7 M952.6,113.2 L958.6,113.2 Q961.6,113.2 964.6,109.7" fill="none" stroke="#d6d6d6" stroke-width="1.2"/>
<rect x="964" y="99" width="18" height="19" fill="#292929"/>
<path d="M968.5999999999999,107.1 L968.5999999999999,103.05000000000003 A4.050000000000023,4.050000000000023 0 0,1 976.7,103.05000000000003 L976.7,107.1" fill="none" stroke="#e8d8a8" stroke-width="1.3"/>
<rect x="966.3" y="107.1" width="12.700000000000045" height="9.800000000000011" fill="#f0a020" stroke="#f5d596" stroke-width="0.9"/>
<path d="M1010.4,111.6 L1010.4,90.6 L1038.2,90.6 L1038.2,97" fill="none" stroke="#d6d6d6" stroke-width="1.2"/>
<line x1="1019.7" y1="90.6" x2="1019.7" y2="105" stroke="#d6d6d6" stroke-width="1.1"/>
<line x1="1028.9" y1="90.6" x2="1028.9" y2="105" stroke="#d6d6d6" stroke-width="1.1"/>
<line x1="1010.4" y1="97.6" x2="1034" y2="97.6" stroke="#d6d6d6" stroke-width="1.1"/>
<line x1="1010.4" y1="104.5" x2="1024" y2="104.5" stroke="#d6d6d6" stroke-width="1.1"/>
<line x1="1010.4" y1="111.6" x2="1018" y2="111.6" stroke="#d6d6d6" stroke-width="1.1"/>
<path d="M1036.5,95.5 L1041.2,100 L1025,116 L1020.3,117 L1021.2,112 Z" fill="#292929" stroke="#3f92e0" stroke-width="1.5" stroke-linejoin="round"/>
<line x1="1023" y1="110.5" x2="1028" y2="115" stroke="#3f92e0" stroke-width="1.1"/>
<path d="M1073.6,112.5 L1073.6,87.9 L1099,87.9" fill="none" stroke="#8a8a8a" stroke-width="1.2"/>
<path d="M1076.8,112.6 L1076.8,90.6 L1100.8,90.6 L1100.8,104.5" fill="none" stroke="#8a8a8a" stroke-width="1.2"/>
<line x1="1084.6" y1="90.6" x2="1084.6" y2="109.5" stroke="#8a8a8a" stroke-width="1.0999999999999999"/>
<line x1="1092.7" y1="90.6" x2="1092.7" y2="104.5" stroke="#8a8a8a" stroke-width="1.0999999999999999"/>
<line x1="1076.8" y1="97.5" x2="1100.8" y2="97.5" stroke="#8a8a8a" stroke-width="1.0999999999999999"/>
<line x1="1076.8" y1="104.5" x2="1092.7" y2="104.5" stroke="#8a8a8a" stroke-width="1.0999999999999999"/>
<line x1="1076.8" y1="109.5" x2="1092.7" y2="109.5" stroke="#8a8a8a" stroke-width="1.0999999999999999"/>
<path d="M1076.8,109.5 L1088.6,109.5 M1076.8,112.6 L1082.6,112.6 Q1085.6,112.6 1088.6,109.5" fill="none" stroke="#8a8a8a" stroke-width="1.2"/>
<rect x="1086" y="100" width="18" height="19" fill="#292929"/>
<circle cx="1095.4" cy="105.4" r="3.6" fill="none" stroke="#8a8a8a" stroke-width="1.2"/>
<path d="M1089,117.5 Q1089.5,111 1095.4,111 Q1101.3,111 1101.8,117.5" fill="none" stroke="#8a8a8a" stroke-width="1.2"/>
<path d="M1140.8,111.2 L1140.8,87.6 L1164.6,87.6 Z" fill="none" stroke="#d6d6d6" stroke-width="1.3" stroke-linejoin="miter"/>
<path d="M1155,96.6 Q1158.3,98 1157.4,101 Q1157.5,103.2 1160,102.8 L1167.7,98.9" fill="none" stroke="#e25a6a" stroke-width="1.5"/>
<path d="M1140.8,114.2 Q1150,109 1155,107.7 Q1158.3,108 1157.4,111.5 Q1157.5,113.7 1160,113.2 L1167.7,109.4" fill="none" stroke="#e25a6a" stroke-width="1.5"/>
<path d="M1161.1,144.2 L1163.6,146.7 L1166.1,144.2" fill="none" stroke="#e0e0e0" stroke-width="1.1"/>
<path d="M94.5,196.5 L99,200.9 L103.5,196.5" fill="none" stroke="#e0e0e0" stroke-width="1.3"/>
<circle cx="119.9" cy="193.9" r="1.05" fill="#e0e0e0"/>
<circle cx="119.9" cy="198" r="1.05" fill="#e0e0e0"/>
<circle cx="119.9" cy="202" r="1.05" fill="#e0e0e0"/>
<path d="M136.5,192.4 L148.4,203.3 M148.4,192.4 L136.5,203.3" stroke="#7a7a7a" stroke-width="1.2"/>
<path d="M159.3,197.3 L164.3,202.8 L174.3,192.3" fill="none" stroke="#7a7a7a" stroke-width="1.2"/>
<text x="183" y="202.6" font-family="Liberation Serif" font-style="italic" font-size="16" textLength="14.5" lengthAdjust="spacingAndGlyphs" fill="#e8e8e8">fx</text>
<path d="M204.5,196.5 L208.7,200.7 L212.9,196.5" fill="none" stroke="#bdbdbd" stroke-width="1.1"/>
<path d="M680.8,43.8 L686.3,56.8 M687.2,43.8 L681.7,56.8" stroke="#e6ddd2" stroke-width="1.2"/>
<circle cx="680.5" cy="59.3" r="2.1" fill="#1b2a3a" stroke="#4a90d0" stroke-width="1.3"/>
<circle cx="687.3" cy="59.3" r="2.1" fill="#1b2a3a" stroke="#4a90d0" stroke-width="1.3"/>
<path d="M681.5,92.9 L675.3,92.9 L675.3,77.8 L681.5,77.8 L685,81" fill="none" stroke="#d8d8d8" stroke-width="1.2"/>
<path d="M682.2,80.9 L688,80.9 L692.5,85.4 L692.5,95.2 L682.2,95.2 Z M688,80.9 L688,85.4 L692.5,85.4" fill="none" stroke="#d8d8d8" stroke-width="1.2" stroke-linejoin="round"/>
<line x1="685.5" y1="89" x2="689.8" y2="89" stroke="#d8d8d8" stroke-width="1"/>
<line x1="685.5" y1="91.8" x2="689.8" y2="91.8" stroke="#d8d8d8" stroke-width="1"/>
<g transform="translate(677.3,109.6)"><path d="M3,2.6 L0.6,2.6 L0.6,17.5 L7.6,17.5" fill="none" stroke="#f0b840" stroke-width="1.4"/><path d="M10.4,2.6 L13,2.6 L13,7.6" fill="none" stroke="#f0b840" stroke-width="1.4"/><path d="M3,5.4 L10.4,5.4 L10.4,3.6 Q10.4,0.5 6.7,0.5 Q3,0.5 3,3.6 Z" fill="none" stroke="#c8c8c8" stroke-width="1.2"/><rect x="8.3" y="8.6" width="7" height="9.4" fill="#292929" stroke="#c8c8c8" stroke-width="1.2"/></g>
<g transform="translate(706,143)"><path d="M3.1,3.6 L0.6,3.6 L0.6,24.4 L9.5,24.4" fill="none" stroke="#f0b840" stroke-width="1.5"/><path d="M13.6,3.6 L16.2,3.6 L16.2,9.6" fill="none" stroke="#f0b840" stroke-width="1.5"/><path d="M3.4,7.4 L13.4,7.4 L13.4,5 Q13.4,0.6 8.4,0.6 Q3.4,0.6 3.4,5 Z" fill="none" stroke="#c8c8c8" stroke-width="1.3"/><rect x="10.8" y="11.6" width="10.2" height="14.2" fill="#292929" stroke="#c8c8c8" stroke-width="1.3"/></g>
<g transform="translate(739.8,143)"><path d="M3.1,3.6 L0.6,3.6 L0.6,24.4 L9.5,24.4" fill="none" stroke="#f0b840" stroke-width="1.5"/><path d="M13.6,3.6 L16.2,3.6 L16.2,9.6" fill="none" stroke="#f0b840" stroke-width="1.5"/><path d="M3.4,7.4 L13.4,7.4 L13.4,5 Q13.4,0.6 8.4,0.6 Q3.4,0.6 3.4,5 Z" fill="none" stroke="#c8c8c8" stroke-width="1.3"/><rect x="3.6" y="10.9" width="17.6" height="15" fill="#292929" stroke="#c8c8c8" stroke-width="1.3"/><path d="M6.6,10.9 L6.6,25.9 M17.6,10.9 L17.6,25.9 M3.6,13.6 L21.2,13.6 M3.6,23 L21.2,23" stroke="#c8c8c8" stroke-width="0.9"/><path d="M7.8,21.5 L11,16.5 L13.8,19.3 L15.2,18 L17,21.5 Z" fill="#4a90d0"/></g>
<g transform="translate(674.4,323) scale(0.68)"><path d="M0,0 L11.8,0.3 L6.4,4.6 L11,9 L0,9 Z" fill="#3d9be9"/><text x="-0.8" y="24.2" font-size="24" font-weight="bold" textLength="11.6" lengthAdjust="spacingAndGlyphs" fill="#3d9be9">a</text><path d="M15.8,14.5 L27.6,14.5 L27.6,23.8 L16.9,23 L22,18.5 Z" fill="#6fdc84"/><path d="M15.2,1.7 L24.5,1 M19.7,-3.5 L18.7,6 Q18,11 20.5,11.5 M15.5,8.8 Q16,4.5 22.5,4.5 Q28,4.5 27.5,8.5 Q27,12 22.5,12.3 M17.5,10 Q15,10 15.2,8.5" fill="none" stroke="#6fdc84" stroke-width="1.5"/></g>
<path d="M675,368.4 L675,374.5 L692.7,374.5 L692.7,358.7 L684,358.7" fill="none" stroke="#858585" stroke-width="1.2"/>
<rect x="684" y="358.7" width="8.7" height="2.6" fill="#858585"/>
<rect x="678.3" y="366.9" width="11.4" height="3.9" fill="none" stroke="#858585" stroke-width="1.1"/>
<path d="M680.6,366.6 L683,363.2 L685.4,366.6 Z" fill="#858585"/>
<path d="M678.6,357.3 L682.8,357.3 L680.6,360.5 L682.4,360.5 L676.4,367.3 L678.3,362.9 L676,362.9 Z" fill="#858585"/>
<rect x="675.2" y="460.8" width="16.6" height="16.4" fill="none" stroke="#d8d8d8" stroke-width="1.2"/>
<line x1="675.2" y1="467.5" x2="691.8" y2="467.5" stroke="#d8d8d8" stroke-width="1.1"/>
<line x1="675.2" y1="471.2" x2="691.8" y2="471.2" stroke="#d8d8d8" stroke-width="1"/>
<line x1="675.2" y1="474.5" x2="691.8" y2="474.5" stroke="#d8d8d8" stroke-width="1"/>
<line x1="683.5" y1="467.5" x2="683.5" y2="477.2" stroke="#d8d8d8" stroke-width="1"/>
<path d="M677.5,463.3 L681,463.3 L679.25,465.5 Z M685.8,463.3 L689.3,463.3 L687.55,465.5 Z" fill="#4a90d0"/>
<path d="M687.4,497.8 L691.8,497.8 L691.8,508.8 L687.2,513 L675.3,513 L675.3,508.8 M675.3,500.3 L675.3,497.8 L678,497.8 M691.8,508.8 Q687.6,508.4 687.2,513" fill="none" stroke="#d8d8d8" stroke-width="1.2" stroke-linejoin="round"/>
<path d="M684.35,497.35 Q685.8,496.2 686.9,497.3 Q687.9,498.4 686.65,499.65 L678.15,508.15 L675,509.2 L675.85,505.85 Z" fill="#4596e0" stroke="#2a6cb0" stroke-width="0.5"/>
<path d="M683.6,531.2 L691.6,531.2 L691.6,542.0999999999999 L687.4,546.3 L675.6,546.3 L675.6,538.2 M691.6,542.0999999999999 Q687.4,541.5999999999999 687.4,546.3" fill="none" stroke="#d8d8d8" stroke-width="1.2" stroke-linejoin="round"/>
<path d="M674.6,529.5 L682.6,537.5 M682.6,529.5 L674.6,537.5" stroke="#d94a5a" stroke-width="1.2"/>
<path d="M675.6,564.6 L691.6,564.6 L691.6,576.1999999999999 L687.4,580.4 L675.6,580.4 Z M691.6,576.1999999999999 Q687.4,575.6999999999999 687.4,580.4" fill="none" stroke="#d8d8d8" stroke-width="1.2" stroke-linejoin="round"/>
<rect x="677.6" y="599.4" width="13" height="17.8" fill="none" stroke="#d8d8d8" stroke-width="1.2"/>
<rect x="680.3" y="603.8" width="3.6" height="3.2" fill="#d8d8d8"/>
<rect x="680.3" y="609.8" width="3.6" height="3.2" fill="#d8d8d8"/>
<line x1="685" y1="605.4" x2="688" y2="605.4" stroke="#d8d8d8" stroke-width="1"/>
<line x1="685" y1="611.4" x2="688" y2="611.4" stroke="#d8d8d8" stroke-width="1"/>
<rect x="1000.8" y="657.8" width="11.8" height="11.2" fill="none" stroke="#e6e6e6" stroke-width="1.1"/>
<line x1="1004.7" y1="657.8" x2="1004.7" y2="669" stroke="#e6e6e6" stroke-width="1"/>
<line x1="1008.7" y1="657.8" x2="1008.7" y2="669" stroke="#e6e6e6" stroke-width="1"/>
<line x1="1000.8" y1="661.5" x2="1012.6" y2="661.5" stroke="#e6e6e6" stroke-width="1"/>
<line x1="1000.8" y1="665.3" x2="1012.6" y2="665.3" stroke="#e6e6e6" stroke-width="1"/>
<rect x="1041" y="657.8" width="12.8" height="11.2" fill="none" stroke="#e6e6e6" stroke-width="1.1"/>
<rect x="1044.3" y="660.3" width="6.3" height="6.2" fill="none" stroke="#e6e6e6" stroke-width="1"/>
<line x1="1045.5" y1="662.5" x2="1049.5" y2="662.5" stroke="#e6e6e6" stroke-width="0.8"/>
<line x1="1045.5" y1="664.5" x2="1049.5" y2="664.5" stroke="#e6e6e6" stroke-width="0.8"/>
<path d="M1081,657.8 L1081,669 L1094.2,669 L1094.2,657.8 L1081,657.8 M1085.2,657.8 L1085.2,664 M1089.3,657.8 L1089.3,664 L1094.2,664" fill="none" stroke="#e6e6e6" stroke-width="1.1"/>
<line x1="1113.2" y1="663.8" x2="1121.2" y2="663.8" stroke="#9a9a9a" stroke-width="1.2"/>
<line x1="1126.8" y1="663.8" x2="1200" y2="663.8" stroke="#bdbdbd" stroke-width="1.2"/>
<rect x="1173.6" y="657.3" width="5.4" height="12" fill="#a8a8a8"/>
<path d="M59.6,661.4 Q59.3,659.6 61,660.5 L63.2,662.1 L66.8,662.1 L69,660.5 Q70.7,659.6 70.4,661.4 L67.6,664 L67.6,666.3 L65.6,666.3 L63.7,671.4 L61.2,671.4 L62.5,666 L62.4,664 Z" fill="none" stroke="#e6e6e6" stroke-width="1.1" stroke-linejoin="round"/>
<circle cx="65" cy="658.3" r="1.5" fill="none" stroke="#e6e6e6" stroke-width="1.1"/>
<path d="M66.6,668.3 L68.7,670.7 L73.9,665.4" fill="none" stroke="#e6e6e6" stroke-width="1.2"/>
</svg>
</body></html>
